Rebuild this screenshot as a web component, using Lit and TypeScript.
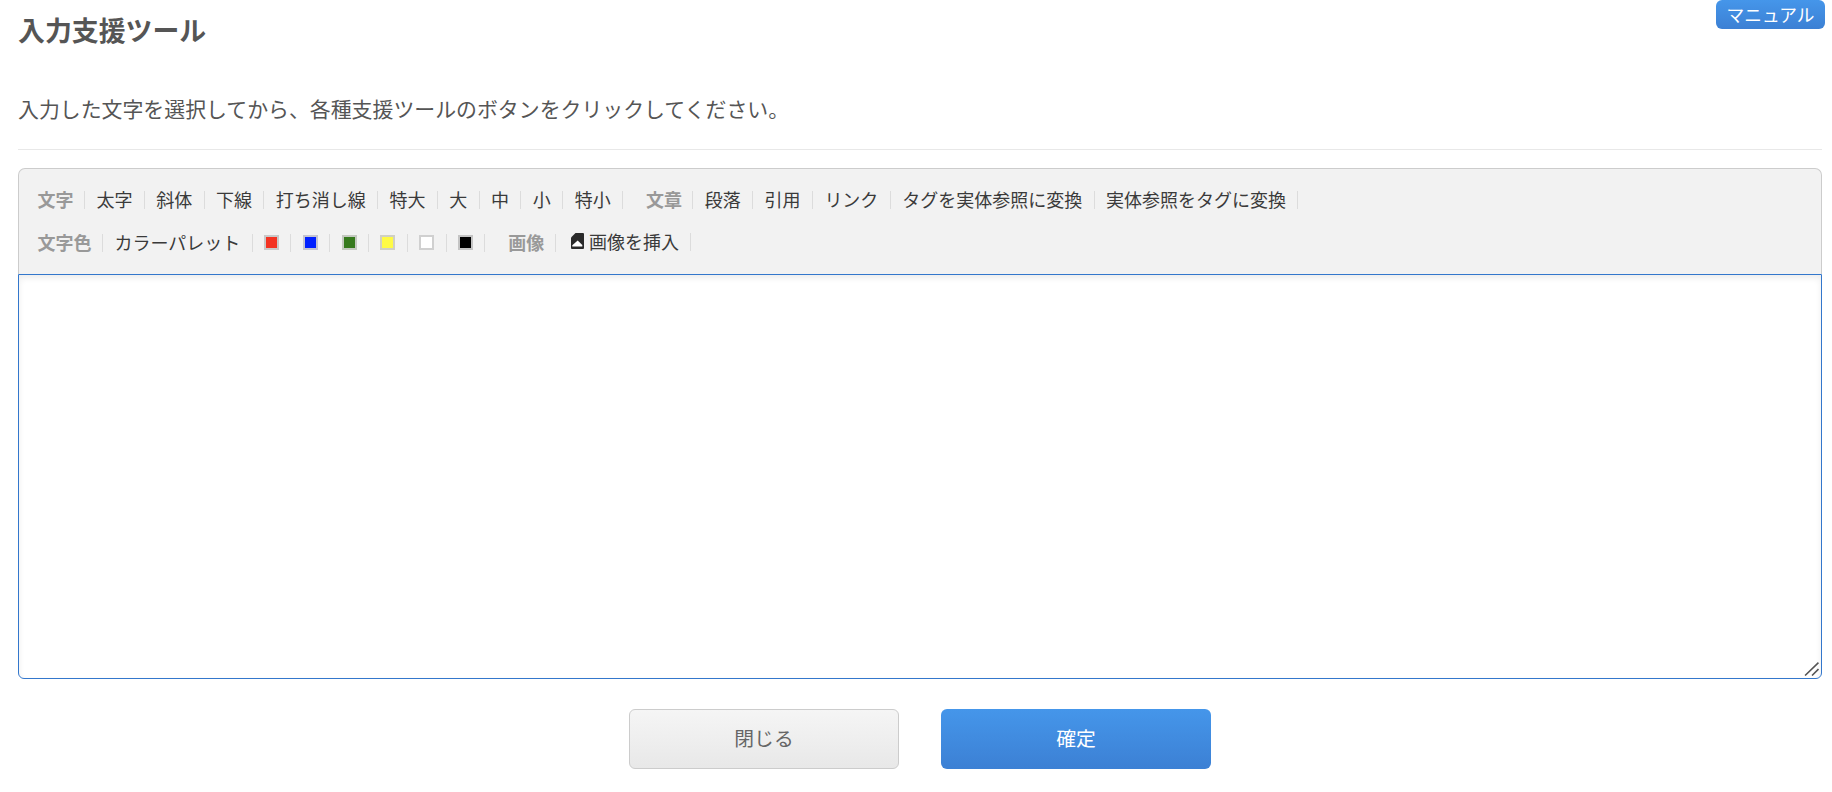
import { LitElement, html, css } from "lit";
import { customElement } from "lit/decorators.js";

const row1a = ["太字", "斜体", "下線", "打ち消し線", "特大", "大", "中", "小", "特小"];
const row1b = ["段落", "引用", "リンク", "タグを実体参照に変換", "実体参照をタグに変換"];
const swatches = [
  ["#f33322", "#c9c9c9"],
  ["#0020ff", "#c4c4d0"],
  ["#367a1d", "#c4c9c0"],
  ["#fffb45", "#d0d0c4"],
  ["#ffffff", "#d0d0d0"],
  ["#000000", "#c4c4c4"],
];

@customElement("app-root")
export class AppRoot extends LitElement {
  static styles = css`
    :host {
      display: block;
      position: relative;
      box-sizing: border-box;
      width: 100%;
      height: 792px;
      padding: 0 10px 0 18px;
      background: #fff;
      overflow: hidden;
      font-family: "Noto Sans CJK JP", "Noto Sans", sans-serif;
      color: #555;
    }
    .manual {
      position: absolute;
      top: 0;
      right: 7px;
      width: 109px;
      height: 29px;
      border-radius: 6px;
      background: linear-gradient(#4596ea, #3c80d4);
      color: #fff;
      font-size: 17.7px;
      line-height: 28px;
      text-align: center;
    }
    h1 {
      margin: 0;
      font-size: 26.9px;
      line-height: 60px;
      font-weight: 700;
      color: #555;
    }
    .lead {
      margin: 33px 0 18px;
      padding-bottom: 26px;
      border-bottom: 1px solid #e8e8e8;
      font-size: 20.9px;
      line-height: 30px;
      color: #555;
    }
    .toolbar {
      box-sizing: border-box;
      height: 106px;
      padding: 10px 18.5px 0;
      background: #f2f2f2;
      border: 1px solid #cccccc;
      border-bottom: none;
      border-radius: 7px 7px 0 0;
    }
    .row {
      display: flex;
      align-items: center;
      height: 42px;
      font-size: 18px;
      color: #3a3a3a;
    }
    .row + .row {
      height: 44px;
    }
    .item {
      display: flex;
      align-items: flex-start;
      height: 18px;
      line-height: 16px;
      padding: 0 11.4px;
      border-right: 1px solid #dcdcdc;
      white-space: nowrap;
    }
    .label {
      color: #999;
      font-weight: 700;
      padding-left: 0;
      padding-right: 10.5px;
    }
    .label.next {
      margin-left: 11.5px;
      padding-left: 11.4px;
    }
    .raised {
      margin-bottom: 2px;
    }
    .sw {
      display: block;
      box-sizing: border-box;
      width: 15px;
      height: 15px;
      margin-top: 1px;
      border: 2px solid #ccc;
    }
    .icon {
      width: 13px;
      height: 16px;
      margin-right: 5px;
      margin-left: 4px;
      flex: none;
    }
    .field {
      position: relative;
    }
    textarea {
      display: block;
      box-sizing: border-box;
      width: 100%;
      height: 405px;
      margin: 0;
      padding: 8px;
      border: 1px solid #3377cc;
      border-radius: 0 0 6px 6px;
      outline: none;
      resize: none;
      box-shadow: inset 0 3px 6px rgba(0, 0, 0, 0.08);
      background: #fff;
    }
    .grip {
      position: absolute;
      right: 3px;
      bottom: 3px;
      width: 15px;
      height: 15px;
    }
    .actions {
      display: flex;
      justify-content: center;
      gap: 42px;
      margin-top: 30px;
    }
    button {
      box-sizing: border-box;
      width: 270px;
      height: 60px;
      border-radius: 6px;
      font-family: inherit;
      font-size: 19.8px;
      line-height: 56px;
      padding: 0 0 3px;
    }
    .close {
      background: linear-gradient(#f5f5f5, #e8e8e8);
      border: 1px solid #cccccc;
      color: #666;
    }
    .ok {
      background: linear-gradient(#4596ea, #3c80d4);
      border: none;
      color: #fff;
    }
  `;

  render() {
    return html`
      <div class="manual">マニュアル</div>
      <h1>入力支援ツール</h1>
      <p class="lead">入力した文字を選択してから、各種支援ツールのボタンをクリックしてください。</p>
      <div class="toolbar">
        <div class="row">
          <span class="item label">文字</span>
          ${row1a.map((t) => html`<span class="item">${t}</span>`)}
          <span class="item label next">文章</span>
          ${row1b.map((t) => html`<span class="item">${t}</span>`)}
        </div>
        <div class="row">
          <span class="item label">文字色</span>
          <span class="item">カラーパレット</span>
          ${swatches.map(
            ([c, b]) =>
              html`<span class="item"><i class="sw" style="background:${c};border-color:${b}"></i></span>`
          )}
          <span class="item label next">画像</span>
          <span class="item raised">
            <svg class="icon" viewBox="0 0 13 16">
              <path fill="#2a2a2a" d="M4.5 0H12a1 1 0 0 1 1 1v14a1 1 0 0 1-1 1H1a1 1 0 0 1-1-1V4.5z" />
              <path fill="#fff" d="M1.3 13.5v-1.3L6.7 7.5l4.6 4.4v1.6z" />
            </svg>画像を挿入
          </span>
        </div>
      </div>
      <div class="field">
        <textarea></textarea>
        <svg class="grip" viewBox="0 0 14 14">
          <path d="M1 13.5L13.5 1.5M7.5 13.5L13.5 7.5" stroke="#555" stroke-width="1.5" fill="none" />
        </svg>
      </div>
      <div class="actions">
        <button class="close">閉じる</button>
        <button class="ok">確定</button>
      </div>
    `;
  }
}
